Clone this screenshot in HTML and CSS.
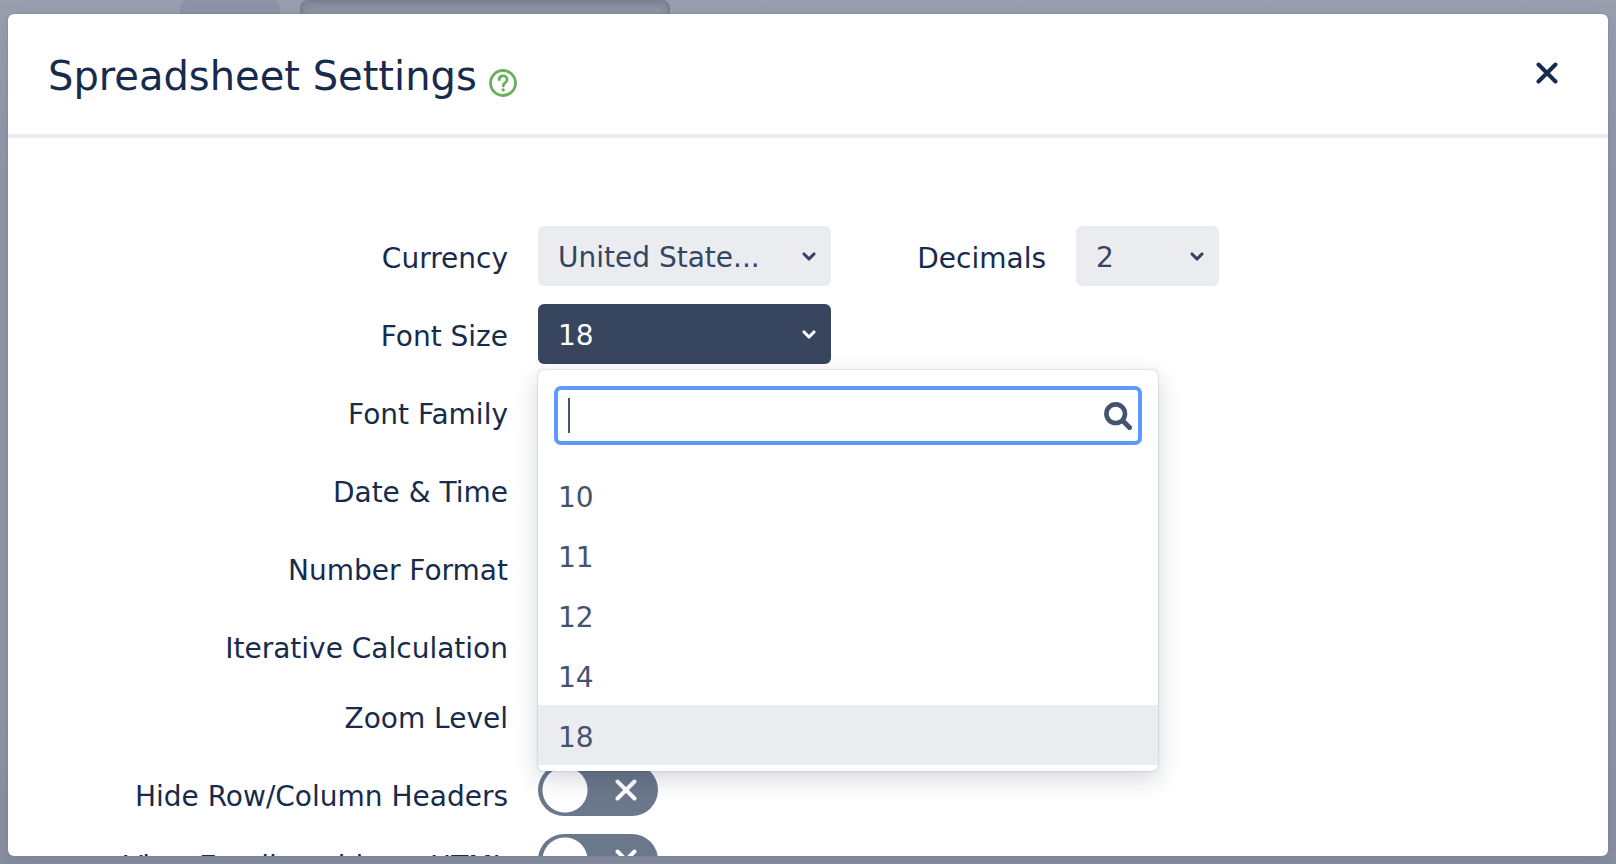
FILE: index.html
```html
<!DOCTYPE html>
<html lang="en">
<head>
<meta charset="utf-8">
<meta name="viewport" content="width=device-width, initial-scale=1">
<title>Spreadsheet Settings</title>
<link rel="stylesheet" href="styles.css">
</head>
<body>
<svg class="defs" aria-hidden="true">
  <symbol id="chevron" viewBox="0 0 14 9"><path d="M2 2l5 5 5-5" fill="none" stroke="currentColor" stroke-width="3.1" stroke-linecap="round" stroke-linejoin="round"/></symbol>
  <symbol id="cross" viewBox="0 0 22 22"><path d="M2.500 2.500l17 17M19.500 2.500l-17 17" fill="none" stroke="currentColor" stroke-width="4" stroke-linecap="round"/></symbol>
</svg>
<div class="backdrop" aria-hidden="true">
  <div class="tab"></div>
  <div class="field"></div>
</div>
<main class="dialog" role="dialog" aria-labelledby="title">
  <header class="header">
    <h1 id="title">Spreadsheet Settings</h1>
    <button class="help" type="button" aria-label="Help">
      <svg viewBox="0 0 28 28"><circle cx="14" cy="14" r="12.5" fill="none" stroke="currentColor" stroke-width="2.8"/><path d="M10.1 10.6c.2-2.4 1.800-3.700 3.900-3.700 2.300 0 4.100 1.400 4.100 3.600 0 1.700-.9 2.600-2.300 3.500-1.100.7-1.500 1.300-1.500 2.700v.4" fill="none" stroke="currentColor" stroke-width="2.800" stroke-linecap="round"/><circle cx="14.200" cy="20.900" r="1.600" fill="currentColor"/></svg>
    </button>
    <button class="close" type="button" aria-label="Close"><svg><use href="#cross"/></svg></button>
  </header>
  <form class="form">
    <label for="currency">Currency</label>
    <div class="row">
      <div class="select wide">
        <select id="currency"><option>United State...</option></select>
        <svg><use href="#chevron"/></svg>
      </div>
      <label class="inline" for="decimals">Decimals</label>
      <div class="select narrow">
        <select id="decimals"><option>2</option></select>
        <svg><use href="#chevron"/></svg>
      </div>
    </div>

    <label for="size">Font Size</label>
    <div class="row anchor">
      <div class="select wide open">
        <select id="size"><option>18</option></select>
        <svg><use href="#chevron"/></svg>
      </div>
      <div class="popup">
        <div class="search">
          <input type="text" aria-label="Search sizes">
          <span class="caret"></span>
          <svg viewBox="0 0 28 28"><circle cx="11.700" cy="11.700" r="9.300" fill="none" stroke="currentColor" stroke-width="4.600"/><path d="M19.500 19.500l6 6" stroke="currentColor" stroke-width="5" stroke-linecap="round"/></svg>
        </div>
        <ul class="options" role="listbox" aria-label="Font Size">
          <li role="option">10</li>
          <li role="option">11</li>
          <li role="option">12</li>
          <li role="option">14</li>
          <li role="option" class="selected" aria-selected="true">18</li>
        </ul>
      </div>
    </div>

    <span class="label">Font Family</span><div class="row"></div>
    <span class="label">Date &amp; Time</span><div class="row"></div>
    <span class="label">Number Format</span><div class="row"></div>
    <span class="label">Iterative Calculation</span><div class="row short"></div>
    <span class="label">Zoom Level</span><div class="row"></div>

    <label for="headers">Hide Row/Column Headers</label>
    <div class="row short">
      <span class="toggle"><input id="headers" type="checkbox" role="switch"><svg><use href="#cross"/></svg></span>
    </div>
    <label for="html">View Email enable as HTML</label>
    <div class="row short">
      <span class="toggle"><input id="html" type="checkbox" role="switch"><svg><use href="#cross"/></svg></span>
    </div>
  </form>
</main>
</body>
</html>
```
FILE: styles.css
```css
* { box-sizing: border-box; }

body {
  margin: 0;
  height: 100vh;
  padding: 14px 8px 8px;
  overflow: hidden;
  background: linear-gradient(#9aa0b0, #9298a9 20%, #9298a9 80%, #888fa0);
  color: #172b4d;
  font: 28px/60px Verdana, "DejaVu Sans", sans-serif;
}

button, input, select { font: inherit; color: inherit; }
svg { display: block; }
.defs { position: absolute; width: 0; height: 0; }

.backdrop {
  position: absolute;
  inset: 0 0 auto;
  display: flex;
  gap: 20px;
  height: 40px;
  padding-left: 180px;
}
.tab { width: 100px; border-radius: 8px; background: #8e93a7; }
.field {
  width: 370px;
  border: 2px solid #7c8292;
  border-radius: 8px;
  background: #9197a7;
  box-shadow: inset 0 2px 10px #7c8292;
}

.dialog {
  position: relative;
  display: flex;
  flex-direction: column;
  height: 100%;
  overflow: hidden;
  border-radius: 6px;
  background: #fff;
  box-shadow: 0 0 2px #6e7a8e, 0 8px 32px rgba(9, 30, 66, .1);
}

.header {
  display: flex;
  align-items: center;
  flex: none;
  height: 124px;
  padding: 0 50px 0 40px;
  border-bottom: 4px solid #ebecf0;
}
h1 { margin: 0; padding-top: 4px; font-size: 40px; font-weight: 400; line-height: 60px; }
button { padding: 0; border: 0; background: none; cursor: pointer; }
.help { margin: 18px 0 0 12px; color: #6aaf5b; }
.help svg { width: 28px; height: 28px; }
.close { margin-left: auto; padding-bottom: 2px; }
.close svg { width: 22px; height: 22px; }

.form {
  display: grid;
  grid-template-columns: 500px 1fr;
  column-gap: 30px;
  row-gap: 18px;
  align-items: start;
  padding-top: 88px;
}
.form > label, .label {
  height: 0;
  padding-top: 3px;
  text-align: right;
  white-space: nowrap;
}
.row { display: flex; min-height: 60px; }
.row.short { min-height: 52px; }
.anchor { position: relative; }
.inline {
  width: 215px;
  height: 60px;
  margin-right: 30px;
  padding-top: 3px;
  text-align: right;
}

.select { position: relative; height: 60px; color: #344563; }
.select select {
  width: 100%;
  height: 100%;
  padding: 2px 56px 0 20px;
  border: 0;
  border-radius: 6px;
  appearance: none;
  background: #ebecf0;
}
.select svg {
  position: absolute;
  top: 26px;
  right: 15px;
  width: 14px;
  height: 9px;
  pointer-events: none;
}
.wide { width: 293px; }
.narrow { width: 143px; }
.open { color: #fff; }
.open select { background: #38455f; }

.popup {
  position: absolute;
  z-index: 1;
  top: 66px;
  left: 0;
  width: 620px;
  padding: 16px 0 6px;
  border-radius: 6px;
  background: #fff;
  box-shadow: 0 0 2px rgba(9, 30, 66, .31), 0 8px 24px rgba(9, 30, 66, .18);
}
.search { position: relative; height: 59px; margin: 0 16px; }
.search input {
  width: 100%;
  height: 100%;
  padding: 0 48px 0 14px;
  border: 4px solid #5c9bfa;
  border-radius: 7px;
  outline: 0;
  background: #fff;
}
.search svg {
  position: absolute;
  top: 16px;
  right: 10px;
  width: 28px;
  height: 28px;
  color: #44546f;
}
.caret {
  position: absolute;
  top: 12px;
  left: 14px;
  width: 2px;
  height: 35px;
  background: #44546f;
}
.options { margin: 0; padding: 20px 0 0; list-style: none; color: #44546f; }
.options li { height: 60px; padding: 3px 20px 0; }
.selected { background: #ebecf0; }

.toggle { position: relative; width: 120px; height: 52px; color: #fff; }
.toggle input {
  width: 100%;
  height: 100%;
  margin: 0;
  border-radius: 26px;
  appearance: none;
  background: radial-gradient(circle at 27px 26px, #fff 22px, #6b778a 23px);
}
.toggle svg {
  position: absolute;
  top: 15px;
  right: 21px;
  width: 22px;
  height: 22px;
  pointer-events: none;
}
```
